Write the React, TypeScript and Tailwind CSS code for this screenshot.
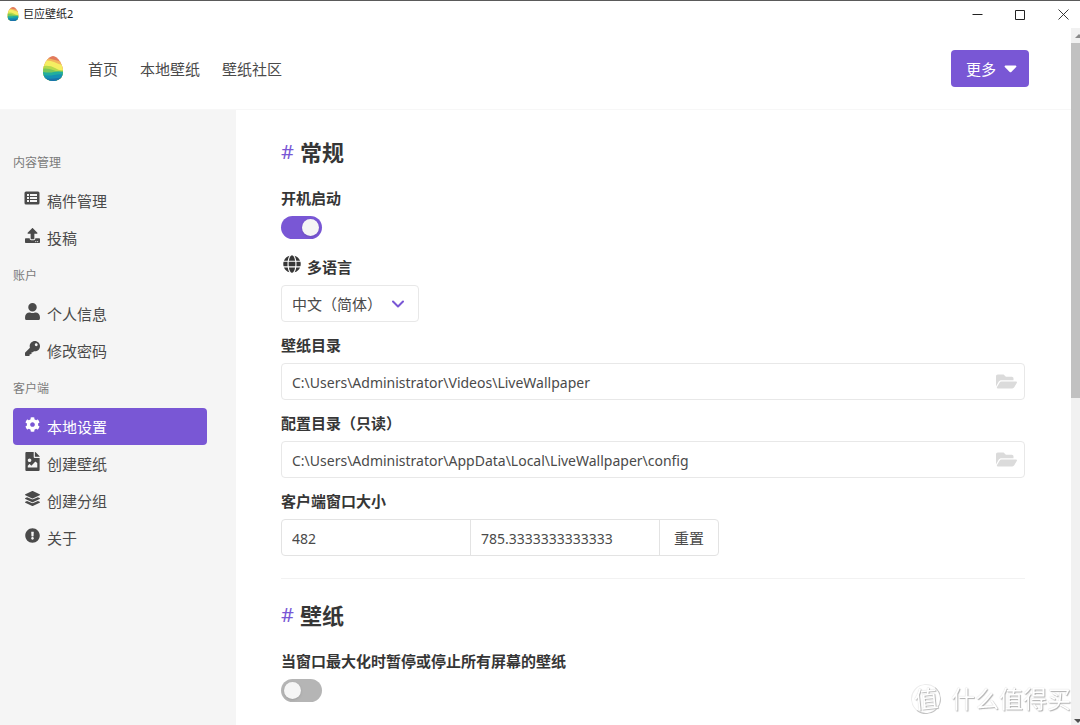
import { useId, useState } from 'react'
import type { ReactNode } from 'react'
import {
  FaCog,
  FaExclamationCircle,
  FaFileImage,
  FaFolderOpen,
  FaGlobe,
  FaKey,
  FaLayerGroup,
  FaUpload,
  FaUser,
} from 'react-icons/fa'

type MenuItem = { label: string; icon: ReactNode; active?: boolean }
type MenuGroup = { title: string; items: MenuItem[] }

const NAV_LINKS = ['首页', '本地壁纸', '壁纸社区']

const MENU: MenuGroup[] = [
  {
    title: '内容管理',
    items: [
      { label: '稿件管理', icon: <ListIcon /> },
      { label: '投稿', icon: <FaUpload className="size-[15px]" /> },
    ],
  },
  {
    title: '账户',
    items: [
      { label: '个人信息', icon: <FaUser className="size-[17px] shrink-0" /> },
      { label: '修改密码', icon: <FaKey className="size-[15px]" /> },
    ],
  },
  {
    title: '客户端',
    items: [
      { label: '本地设置', icon: <FaCog className="size-[15px]" />, active: true },
      { label: '创建壁纸', icon: <FaFileImage className="size-[19px] shrink-0" /> },
      { label: '创建分组', icon: <FaLayerGroup className="size-[15px]" /> },
      { label: '关于', icon: <FaExclamationCircle className="size-[15px]" /> },
    ],
  },
]

function ListIcon() {
  return (
    <svg viewBox="0 0 16 14" className="h-3.5 w-4" aria-hidden="true">
      <rect x="0.500" y="0.500" width="15" height="13" rx="1.500" fill="currentColor" />
      <path d="M3 3H5V5H3ZM6 3H13V5H6ZM3 6H5V8H3ZM6 6H13V8H6ZM3 9H5V11H3ZM6 9H13V11H6Z" fill="#f5f5f5" />
    </svg>
  )
}

function EggLogo({ className }: { className?: string }) {
  const id = useId()
  return (
    <svg viewBox="0 0 20 25" className={className} aria-hidden="true">
      <clipPath id={id}>
        <path d="M10 0C15 0 20 9 20 15.5C20 21.5 15.5 25 10 25S0 21.5 0 15.5C0 9 5 0 10 0Z" />
      </clipPath>
      <g clipPath={`url(#${id})`}>
        <rect width="20" height="25" fill="#e27a5c" />
        <path d="M0 1L8 3L20 6V25H0Z" fill="#f2b55c" />
        <path d="M0 5Q6 3.500 11 6T20 9V25H0Z" fill="#f5ee62" />
        <path d="M0 10Q7 9 12 12T20 14V25H0Z" fill="#b5d94c" />
        <path d="M0 12.500Q6 12 10 14T20 15V25H0Z" fill="#79c75c" />
        <path d="M0 16Q6 17 11 16T20 16V25H0Z" fill="#22ae9e" />
        <path d="M0 19Q6 20 11 19T20 18.500V25H0Z" fill="#1590b4" />
        <path d="M0 22Q6 23 11 22.500T20 21V25H0Z" fill="#1b71ab" />
      </g>
    </svg>
  )
}

function TitleBar() {
  return (
    <div className="flex h-7 shrink-0 items-center border-t border-[#5a5a5a] bg-white pb-px pl-[7px] pr-[11px]">
      <EggLogo className="h-3.5 w-3" />
      <span className="ml-1 flex-1 text-[11px] text-[#222]">巨应壁纸2</span>
      <div className="flex items-center gap-8 text-[#222]">
        <button aria-label="最小化">
          <svg viewBox="0 0 11 11" className="size-[11px]" stroke="currentColor">
            <path d="M0.5 5.500H10.500" />
          </svg>
        </button>
        <button aria-label="最大化">
          <svg viewBox="0 0 11 11" className="size-[11px]" fill="none" stroke="currentColor">
            <path d="M0.5 1.500H9.500V10.500H0.500Z" />
          </svg>
        </button>
        <button aria-label="关闭">
          <svg viewBox="0 0 11 11" className="size-[11px]" stroke="currentColor" strokeWidth="0.9">
            <path d="M0.5 0.500L10.500 10.500M10.500 0.500L0.500 10.500" />
          </svg>
        </button>
      </div>
    </div>
  )
}

function Header() {
  return (
    <header className="flex h-[82px] shrink-0 items-center border-b border-[#f7f7f7] bg-white pl-[43px] pr-[42px]">
      <EggLogo className="h-[25px] w-5" />
      <nav className="ml-[25px] flex flex-1 gap-[22px]">
        {NAV_LINKS.map((link) => (
          <a key={link} href="#">
            {link}
          </a>
        ))}
      </nav>
      <button className="flex h-[37px] items-center gap-2 rounded bg-[#7957d5] pl-[15px] pr-3 text-white">
        更多
        <svg viewBox="0 0 13 8" className="h-2 w-[13px]" fill="currentColor" aria-hidden="true">
          <path d="M1.300 0.500H11.700Q13 1 12.200 2L7.300 7Q6.500 7.700 5.700 7L0.800 2Q0 1 1.300 0.500Z" />
        </svg>
      </button>
    </header>
  )
}

function Sidebar() {
  return (
    <aside className="w-[236px] shrink-0 bg-[#f5f5f5] pl-[13px] pr-[29px] pt-[33px]">
      {MENU.map((group) => (
        <div key={group.title}>
          <p className="h-[39px] text-xs/[39px] text-[#7a7a7a]">{group.title}</p>
          <ul>
            {group.items.map(({ label, icon, active }) => (
              <li key={label}>
                <a
                  href="#"
                  className={`flex h-[37px] gap-[7px] rounded-sm px-[11px] ${active ? 'bg-[#7957d5] text-white' : ''}`}
                >
                  <span className="mt-2 flex size-4 items-center justify-center">{icon}</span>
                  <span className="leading-[39px]">{label}</span>
                </a>
              </li>
            ))}
          </ul>
        </div>
      ))}
    </aside>
  )
}

function SectionTitle({ children }: { children: ReactNode }) {
  return (
    <h2 className="mb-[22px] flex gap-1.5 text-[22px]/[26px] font-bold text-[#363636]">
      <span className="text-xl/[26px] font-normal text-[#7957d5]">#</span>
      {children}
    </h2>
  )
}

type FieldProps = { label: ReactNode; htmlFor: string; children: ReactNode }

function Field({ label, htmlFor, children }: FieldProps) {
  return (
    <div className="mb-3">
      <label htmlFor={htmlFor} className="mb-[7px] flex h-[22px] items-center font-bold text-[#363636]">
        {label}
      </label>
      {children}
    </div>
  )
}

function Switch({ id, defaultOn = false }: { id: string; defaultOn?: boolean }) {
  const [on, setOn] = useState(defaultOn)
  return (
    <div className="flex h-7 items-start">
      <input
        id={id}
        type="checkbox"
        role="switch"
        checked={on}
        onChange={(e) => setOn(e.target.checked)}
        className="flex h-[23px] w-[41px] appearance-none items-center rounded-full bg-[#b5b5b5] px-[3px] before:size-[17px] before:rounded-full before:bg-[#f5f5f5] before:shadow checked:justify-end checked:bg-[#7957d5]"
      />
    </div>
  )
}

function PathInput({ id, value, readOnly }: { id: string; value: string; readOnly?: boolean }) {
  return (
    <div className="relative">
      <input
        id={id}
        type="text"
        defaultValue={value}
        readOnly={readOnly}
        className="h-[37px] w-full rounded border border-[#e8e8e8] bg-white pl-2.5 pr-10 pt-0.5 text-sm"
      />
      <button aria-label="选择目录" className="absolute right-2 top-2 text-[#dbdbdb]">
        <FaFolderOpen className="size-[21px]" />
      </button>
    </div>
  )
}

function Settings() {
  return (
    <main className="min-w-0 flex-1 bg-white pl-[45px] pr-[46px] pt-[29px]">
      <SectionTitle>常规</SectionTitle>
      <Field label="开机启动" htmlFor="autostart">
        <Switch id="autostart" defaultOn />
      </Field>
      <Field
        htmlFor="language"
        label={
          <>
            <FaGlobe className="mb-1.5 ml-0.5 mr-1.5 size-[18px]" />
            多语言
          </>
        }
      >
        <div className="relative w-[138px]">
          <select
            id="language"
            className="h-[37px] w-full appearance-none rounded border border-[#e8e8e8] bg-white pl-2.5 pr-8 pt-px"
          >
            <option>中文（简体）</option>
            <option>English</option>
          </select>
          <svg
            viewBox="0 0 12 8"
            className="pointer-events-none absolute right-[15px] top-[15px] h-2 w-3"
            fill="none"
            stroke="#7957d5"
            strokeWidth="2"
            strokeLinecap="round"
            strokeLinejoin="round"
          >
            <path d="M1 1.500L6 6.500L11 1.500" />
          </svg>
        </div>
      </Field>
      <Field label="壁纸目录" htmlFor="wallpaper-dir">
        <PathInput id="wallpaper-dir" value="C:\Users\Administrator\Videos\LiveWallpaper" />
      </Field>
      <Field label="配置目录（只读）" htmlFor="config-dir">
        <PathInput id="config-dir" value="C:\Users\Administrator\AppData\Local\LiveWallpaper\config" readOnly />
      </Field>
      <Field label="客户端窗口大小" htmlFor="window-width">
        <div className="flex h-[37px]">
          <input
            id="window-width"
            type="text"
            defaultValue="482"
            className="w-[190px] rounded-l border border-[#e3e3e3] px-2.5 pt-0.5 text-sm"
          />
          <input
            aria-label="窗口高度"
            type="text"
            defaultValue="785.3333333333333"
            className="-ml-px w-[190px] border border-[#e3e3e3] px-2.5 pt-0.5 text-sm"
          />
          <button className="-ml-px rounded-r border border-[#e3e3e3] px-3.5">重置</button>
        </div>
      </Field>

      <hr className="mb-[23px] mt-[22px] border-[#f2f2f2]" />

      <SectionTitle>壁纸</SectionTitle>
      <Field label="当窗口最大化时暂停或停止所有屏幕的壁纸" htmlFor="pause-on-max">
        <Switch id="pause-on-max" />
      </Field>
    </main>
  )
}

function Scrollbar() {
  return (
    <div className="flex w-[9px] shrink-0 flex-col overflow-hidden bg-[#f1f1f1]">
      <svg viewBox="0 0 9 15" className="h-[15px] w-[9px] shrink-0" fill="#8a8a8a">
        <path d="M4 10L8 6L12 10Z" />
      </svg>
      <div className="h-[51%] bg-[#c1c1c1]" />
      <div className="flex-1" />
      <svg viewBox="0 0 9 8" className="h-2 w-[9px] shrink-0" fill="#505050">
        <path d="M3 2H11L7 6Z" />
      </svg>
    </div>
  )
}

function Watermark() {
  return (
    <div className="pointer-events-none fixed bottom-2.5 right-[9px] flex items-center gap-2.5 text-2xl/[32px] text-white [text-shadow:1px_1px_1px_#b0b0b0,0_0_1px_#c8c8c8]">
      <span className="flex size-[30px] -rotate-6 items-center justify-center rounded-full border border-[#ececec] border-b-[#c4c4c4] border-r-[#c4c4c4] text-2xl/[28px]">
        值
      </span>
      什么值得买
    </div>
  )
}

export default function App() {
  return (
    <div className="flex h-screen flex-col overflow-hidden bg-white font-['Noto_Sans','Noto_Sans_CJK_SC',sans-serif] text-[15px]/[22px] text-[#4a4a4a]">
      <TitleBar />
      <div className="flex min-h-0 flex-1">
        <div className="flex min-w-0 flex-1 flex-col overflow-hidden">
          <Header />
          <div className="flex min-h-0 flex-1">
            <Sidebar />
            <Settings />
          </div>
        </div>
        <Scrollbar />
      </div>
      <Watermark />
    </div>
  )
}
